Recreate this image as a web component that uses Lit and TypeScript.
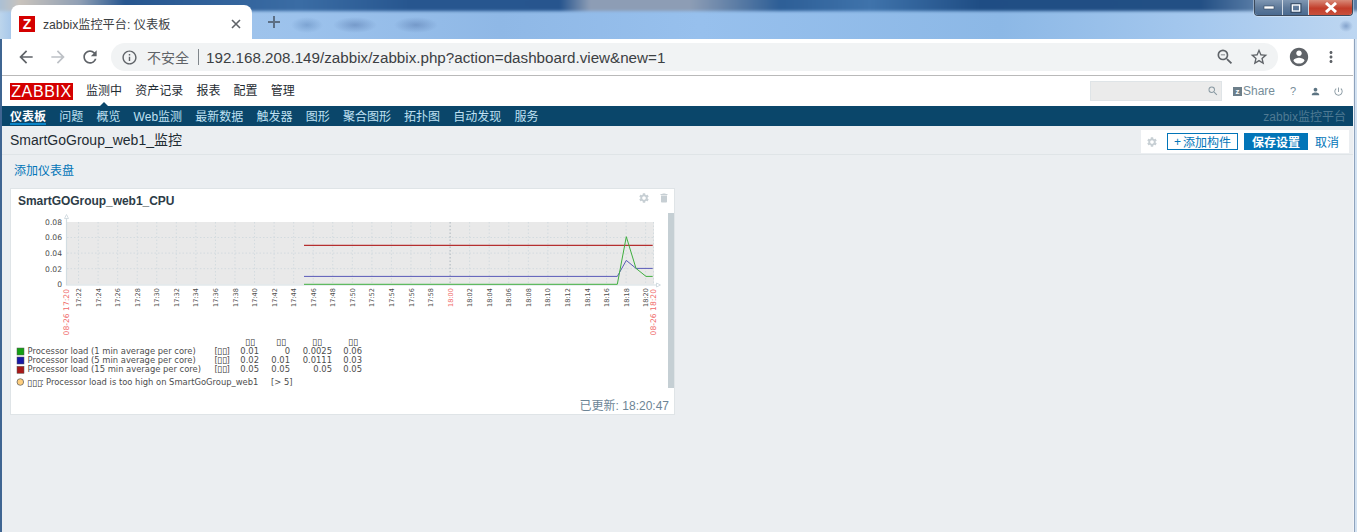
import { LitElement, html, css, svg } from 'lit';
import { customElement } from 'lit/decorators.js';

const GEAR = 'M19.14 12.94c.04-.3.06-.61.06-.94 0-.32-.02-.64-.07-.94l2.03-1.58a.49.49 0 0 0 .12-.61l-1.92-3.32a.488.488 0 0 0-.59-.22l-2.39.96c-.5-.38-1.03-.7-1.62-.94l-.36-2.54a.484.484 0 0 0-.48-.41h-3.84c-.24 0-.43.17-.47.41l-.36 2.54c-.59.24-1.13.57-1.62.94l-2.39-.96c-.22-.08-.47 0-.59.22L2.74 8.87c-.12.21-.08.47.12.61l2.03 1.58c-.05.3-.09.63-.09.94s.02.64.07.94l-2.03 1.58a.49.49 0 0 0-.12.61l1.92 3.32c.12.22.37.29.59.22l2.39-.96c.5.38 1.03.7 1.62.94l.36 2.54c.05.24.24.41.48.41h3.84c.24 0 .44-.17.47-.41l.36-2.54c.59-.24 1.13-.56 1.62-.94l2.39.96c.22.08.47 0 .59-.22l1.92-3.32c.12-.22.07-.47-.12-.61l-2.01-1.58zM12 15.6c-1.98 0-3.6-1.62-3.6-3.6s1.62-3.6 3.6-3.6 3.6 1.62 3.6 3.6-1.62 3.6-3.6 3.6z';

const icon = (d: string, size: number, color: string) => html`<svg width=${size} height=${size} viewBox="0 0 24 24" fill=${color}><path d=${d}></path></svg>`;

const mainNav = ['监测中', '资产记录', '报表', '配置', '管理'];
const subNav = ['仪表板', '问题', '概览', 'Web监测', '最新数据', '触发器', '图形', '聚合图形', '拓扑图', '自动发现', '服务'];

// graph geometry, in page pixels (the svg viewBox starts at the card body)
const plot = { left: 67, right: 654, top: 222, bottom: 284.5 };
const timeX = (i: number) => 59 + i * 19.555;
const valY = (v: number) => 284.3 - v * 780;

const times: { x: number; label: string; red: boolean }[] = [];
for (let i = 1; i <= 30; i++) {
  const total = 17 * 60 + 20 + i * 2;
  const h = Math.floor(total / 60);
  const m = String(total % 60).padStart(2, '0');
  times.push({ x: timeX(i), label: `${h}:${m}`, red: total === 18 * 60 });
}

const legend = [
  { color: '#14a014', name: 'Processor load (1 min average per core)', y: 351, vals: ['0.01', '0', '0.0025', '0.06'] },
  { color: '#1818a8', name: 'Processor load (5 min average per core)', y: 360, vals: ['0.02', '0.01', '0.0111', '0.03'] },
  { color: '#a81818', name: 'Processor load (15 min average per core)', y: 369.3, vals: ['0.05', '0.05', '0.05', '0.05'] },
];
const valCols = [259, 290, 332, 362];
const headCols = [250, 281, 317, 353];

const graph = () => svg`
  <rect x=${plot.left} y=${plot.top} width=${plot.right - plot.left} height=${plot.bottom - plot.top} fill="#e9e9e9"></rect>
  ${[0.02, 0.04, 0.06].map((v) => svg`<line class="grid" x1=${plot.left} x2=${plot.right} y1=${valY(v)} y2=${valY(v)}></line>`)}
  ${times.map((t) => svg`<line class=${t.red ? 'grid strong' : 'grid'} x1=${t.x} x2=${t.x} y1=${plot.top} y2=${plot.bottom}></line>`)}
  <line class="grid" x1=${plot.right - 0.5} x2=${plot.right - 0.5} y1=${plot.top} y2=${plot.bottom}></line>
  <path class="axis" d="M66.5 217V285H658"></path>
  <path class="arrow" d="M64.5 218.5 66.5 214.5 68.5 218.5Z"></path>
  <path class="arrow" d="M656.5 283 660.5 285 656.5 287Z"></path>

  <polyline class="line" stroke="#a80000" points="304,245.3 652.7,245.3"></polyline>
  <polyline class="line" stroke="#5a5ab8" points="304,276.4 617.3,276.4 626.3,260.4 636,268.4 652.7,268.4"></polyline>
  <polyline class="line" stroke="#3fae3f" points="304,284.3 617.3,284.3 626.3,236.7 636,268.4 646,276.4 652.7,276.4"></polyline>

  ${[['0.08', 0.08], ['0.06', 0.06], ['0.04', 0.04], ['0.02', 0.02], ['0', 0]].map(
    ([l, v]) => svg`<text class="lbl" x="62" y=${valY(v as number) + 2.8} text-anchor="end">${l}</text>`,
  )}
  ${times.map(
    (t) => svg`<text class=${t.red ? 'lbl tick red' : 'lbl tick'} text-anchor="end" transform="translate(${t.x + 2.6} 288) rotate(-90)">${t.label}</text>`,
  )}
  <text class="lbl red" text-anchor="end" transform="translate(69.2 289) rotate(-90)">08-26 17:20</text>
  <text class="lbl red" text-anchor="end" transform="translate(655.8 289) rotate(-90)">08-26 18:20</text>

  ${headCols.map((x) => svg`<text class="tofu" x=${x} y="345" text-anchor="middle">▯▯</text>`)}
  ${legend.map(
    (row) => svg`
      <rect x="17" y=${row.y - 3} width="7" height="7" fill=${row.color} stroke="#555" stroke-width="0.5"></rect>
      <text class="lbl legend" x="27.5" y=${row.y + 2.8}>${row.name}</text>
      <text class="lbl legend" x="214.5" y=${row.y + 2.8}>[</text>
      <text class="tofu" x="217" y=${row.y + 3}>▯▯</text>
      <text class="lbl legend" x="226.5" y=${row.y + 2.8}>]</text>
      ${row.vals.map((v, i) => svg`<text class="lbl legend" x=${valCols[i]} y=${row.y + 2.8} text-anchor="end">${v}</text>`)}
    `,
  )}
  <circle cx="20.3" cy="382" r="3.3" fill="#ffcf7f" stroke="#555" stroke-width="0.7"></circle>
  <text class="tofu" x="27" y="385.5">▯▯▯</text>
  <text class="lbl legend" x="41" y="385">:</text>
  <text class="lbl legend" x="46" y="385">Processor load is too high on SmartGoGroup_web1</text>
  <text class="lbl legend" x="271" y="385">[&gt; 5]</text>
`;

@customElement('app-root')
export class AppRoot extends LitElement {
  static styles = css`
    :host {
      display: block;
      width: 1357px;
      height: 532px;
      overflow: hidden;
      background: #ebeef1;
      font-family: 'Liberation Sans', 'Noto Sans CJK SC', sans-serif;
      font-size: 12px;
      color: #1f2c33;
    }

    .titlebar {
      position: relative;
      height: 39px;
      box-sizing: border-box;
      padding: 5px 0 0 11px;
      display: flex;
      overflow: hidden;
      background:
        radial-gradient(ellipse 16px 8px at 307px 25px, rgba(100, 140, 190, 0.55), transparent),
        radial-gradient(ellipse 22px 8px at 355px 25px, rgba(100, 135, 185, 0.65), transparent),
        radial-gradient(ellipse 22px 8px at 416px 25px, rgba(100, 135, 185, 0.65), transparent),
        radial-gradient(ellipse 7px 6px at 1346px 26px, rgba(95, 130, 180, 0.6), transparent),
        linear-gradient(90deg, #bcd5ec 0, #a8c8ea 11px, #9cc2ec 300px, #8fb8e6 500px, #97c0ed 700px, #8cb8e6 1000px, #a5c8ee 1200px, #bdd6f1 1357px);
    }
    .titlebar::before {
      content: '';
      position: absolute;
      left: -4px;
      right: -4px;
      top: -4px;
      height: 15px;
      filter: blur(1.5px);
      background: linear-gradient(90deg, #a5bfd9 0, #c9c3bc 24px, #8f9fb4 84px, #27568f 129px, #3a6ca4 304px, #27568f 414px, #27558e 564px, #8d9db5 594px, #8d9db5 694px, #2d5e96 784px, #3f73ab 874px, #1f4d84 984px, #224f84 1204px, #5c7fa8 1264px);
    }
    .tab {
      position: relative;
      width: 241px;
      height: 34px;
      box-sizing: border-box;
      background: #fff;
      border-radius: 8px 8px 0 0;
      display: flex;
      align-items: center;
      padding: 3px 10px 0 8px;
      font-size: 12.2px;
      color: #3c4043;
    }
    .favicon {
      width: 16px;
      height: 16px;
      background: #d40000;
      color: #fff;
      font-weight: bold;
      font-size: 14px;
      line-height: 16px;
      text-align: center;
      margin-right: 8px;
      flex: none;
    }
    .tab-title {
      flex: 1;
      white-space: nowrap;
    }
    .plus {
      position: relative;
      margin: 10px 0 0 15px;
    }
    .controls {
      position: absolute;
      top: 0;
      right: 4px;
      height: 15px;
      display: flex;
      border: 1px solid #3c4a5c;
      border-top: none;
      border-radius: 0 0 4px 4px;
      overflow: hidden;
      box-shadow: 0 0 0 1px rgba(255, 255, 255, 0.35);
    }
    .ctl {
      width: 28px;
      box-sizing: border-box;
      display: flex;
      align-items: center;
      justify-content: center;
      background: linear-gradient(#7f97b3, #5f7a9a 50%, #4a6a90);
      border-right: 1px solid #cfd9e4;
    }
    .ctl.max {
      width: 26px;
    }
    .ctl.close {
      width: 43px;
      border-right: none;
      background: linear-gradient(#d88a78, #c23d2a 55%, #c9503c);
    }

    .frame {
      display: flex;
      height: 493px;
    }
    .edge-left {
      width: 2px;
      background: #3f6592;
      flex: none;
    }
    .edge-right {
      width: 4px;
      background: linear-gradient(90deg, #f3f5f8 25%, #8fa3bc 25%, #8fa3bc 50%, #d3e2f2 50%);
      flex: none;
    }
    .main {
      flex: 1;
      min-width: 0;
    }

    .toolbar {
      height: 36px;
      background: #fff;
      border-bottom: 1px solid #b9b9b9;
      display: flex;
      align-items: center;
      position: relative;
    }
    .tool {
      flex: none;
      display: flex;
    }
    .pill {
      margin-left: 11px;
      width: 1167px;
      height: 28px;
      box-sizing: border-box;
      background: #f1f3f4;
      border-radius: 14px;
      display: flex;
      align-items: center;
      padding: 0 9px 0 10px;
    }
    .insecure {
      margin-left: 9px;
      font-size: 14px;
      color: #5f6368;
    }
    .sep {
      width: 1px;
      height: 16px;
      background: #80868b;
      margin: 0 7px 0 9px;
    }
    .url {
      font-size: 15.2px;
      color: #3c4043;
      flex: 1;
      white-space: nowrap;
    }
    .pill-icons {
      display: flex;
      gap: 14px;
      align-items: center;
    }

    .header {
      height: 30px;
      background: #fff;
      display: flex;
      align-items: center;
      padding-left: 8px;
      box-sizing: border-box;
    }
    .logo {
      width: 63px;
      height: 17px;
      background: #d40000;
      color: #fff;
      font-size: 16px;
      line-height: 17px;
      text-align: center;
      letter-spacing: 0.6px;
      margin-top: 1px;
    }
    .nav {
      display: flex;
      gap: 13.2px;
      margin: 0 0 3px 13px;
      color: #1f2c33;
    }
    .nav .on {
      position: relative;
    }
    .nav .on::after {
      content: '';
      position: absolute;
      left: 14px;
      top: 21px;
      border: 4px solid transparent;
      border-bottom-color: #0a466a;
      border-top: none;
    }
    .header-right {
      margin-left: auto;
      display: flex;
      align-items: center;
      color: #768d99;
      padding-right: 9px;
    }
    .search {
      width: 132px;
      height: 20px;
      box-sizing: border-box;
      background: #ebebeb;
      border: 1px solid #dfe4e7;
      display: flex;
      align-items: center;
      justify-content: flex-end;
      padding-right: 2px;
      margin-right: 11px;
    }
    .share {
      display: flex;
      align-items: center;
      gap: 1px;
      width: 57px;
    }
    .zbox {
      width: 9px;
      height: 9px;
      background: #6d7f8a;
      color: #fff;
      font-size: 8px;
      font-weight: bold;
      line-height: 9px;
      text-align: center;
    }
    .help {
      width: 20px;
      font-size: 11px;
    }
    .user {
      width: 23px;
      display: flex;
    }
    .power {
      display: flex;
    }

    .subnav {
      height: 20px;
      background: #0a466a;
      display: flex;
      align-items: center;
      gap: 13.2px;
      padding: 0 7px 2px 8px;
      box-sizing: border-box;
      color: #bfe0f2;
    }
    .subnav .on {
      position: relative;
      color: #fff;
      font-weight: bold;
    }
    .subnav .on::after {
      content: '';
      position: absolute;
      left: 0;
      right: 0;
      top: 16px;
      height: 2px;
      background: #0a85c8;
    }
    .brand {
      margin-left: auto;
      color: #4f7a93;
    }

    .title-row {
      height: 29px;
      box-sizing: border-box;
      border-bottom: 1px solid #dfe4e7;
      display: flex;
      align-items: center;
      justify-content: space-between;
      padding: 0 4px 0 8px;
    }
    h1 {
      margin: 0 0 2px;
      font-size: 14px;
      font-weight: normal;
      color: #1f2c33;
    }
    .actions {
      background: #fff;
      height: 23px;
      width: 208px;
      box-sizing: border-box;
      display: flex;
      align-items: center;
      padding-left: 5px;
      margin-top: 3px;
    }
    .actions .gear {
      display: flex;
      margin-right: 9px;
    }
    .btn {
      height: 17px;
      box-sizing: border-box;
      display: flex;
      align-items: center;
      justify-content: center;
      gap: 2px;
    }
    .btn.alt {
      width: 71px;
      border: 1px solid #0275b8;
      color: #0275b8;
    }
    .btn.save {
      width: 64px;
      margin-left: 6px;
      background: #0275b8;
      color: #fff;
      font-weight: bold;
    }
    .cancel {
      margin-left: 7px;
      color: #0275b8;
    }

    .add-board {
      height: 33px;
      box-sizing: border-box;
      padding: 6px 0 0 12px;
      color: #0275b8;
    }

    .card {
      width: 665px;
      height: 227px;
      box-sizing: border-box;
      margin-left: 8px;
      background: #fff;
      border: 1px solid #dfe4e7;
    }
    .card-head {
      height: 24px;
      display: flex;
      align-items: center;
      padding: 0 4px 0 7px;
    }
    .card-title {
      font-weight: bold;
      color: #2d3c47;
      letter-spacing: -0.05px;
      flex: 1;
    }
    .card-head svg {
      margin-left: 8px;
      margin-bottom: 6px;
    }
    .card-body {
      display: flex;
      height: 175px;
    }
    .chart {
      width: 657px;
      height: 175px;
      display: block;
      flex: none;
    }
    .scroll {
      width: 6px;
      background: #c5cfd4;
    }
    .updated {
      text-align: right;
      padding: 8px 5px 0 0;
      color: #6d8596;
    }

    .grid {
      stroke: #d3dbdf;
      stroke-width: 1;
      stroke-dasharray: 1.5 2;
    }
    .grid.strong {
      stroke: #aab6bd;
    }
    .axis {
      fill: none;
      stroke: #d3dde2;
      stroke-width: 1.2;
    }
    .arrow {
      fill: #fff;
      stroke: #c9d4da;
      stroke-width: 0.8;
    }
    .line {
      fill: none;
      stroke-width: 1;
    }
    .lbl {
      font-family: 'DejaVu Sans', sans-serif;
      font-size: 7.6px;
      fill: #4d4d4d;
    }
    .legend {
      font-size: 8.4px;
    }
    .tick {
      font-size: 6.6px;
    }
    .red {
      fill: #f06a6a;
    }
    .tofu {
      font-family: 'DejaVu Sans', sans-serif;
      font-size: 9px;
      fill: #333;
    }
  `;

  render() {
    return html`
      <div class="titlebar">
        <div class="tab">
          <span class="favicon">Z</span>
          <span class="tab-title">zabbix监控平台: 仪表板</span>
          <svg width="12" height="12" viewBox="0 0 12 12" stroke="#5f6368" stroke-width="1.6"><path d="M2 2 10 10M10 2 2 10"></path></svg>
        </div>
        <svg class="plus" width="14" height="14" viewBox="0 0 14 14" stroke="#5c6f85" stroke-width="2"><path d="M7 1V13M1 7H13"></path></svg>
        <div class="controls">
          <div class="ctl"><svg width="12" height="5" viewBox="0 0 12 5"><rect x="1" y="1" width="10" height="3" fill="#fff" stroke="#33475f" stroke-width="0.6"></rect></svg></div>
          <div class="ctl max"><svg width="12" height="10" viewBox="0 0 12 10"><rect x="1" y="0.7" width="10" height="8.6" fill="none" stroke="#33475f"></rect><rect x="2.4" y="2" width="7.2" height="6" fill="none" stroke="#fff" stroke-width="1.3"></rect></svg></div>
          <div class="ctl close"><svg width="14" height="11" viewBox="0 0 14 11"><path d="M2 1 12 10M12 1 2 10" stroke="#fff" stroke-width="3"></path></svg></div>
        </div>
      </div>
      <div class="frame">
        <div class="edge-left"></div>
        <div class="main">
          <div class="toolbar">
            <span class="tool" style="margin-left:14px">${icon('M20 11H7.83l5.59-5.59L12 4l-8 8 8 8 1.41-1.41L7.83 13H20v-2z', 20, '#5f6368')}</span>
            <span class="tool" style="margin-left:12px">${icon('M12 4l-1.41 1.41L16.17 11H4v2h12.17l-5.58 5.59L12 20l8-8z', 20, '#bdc1c6')}</span>
            <span class="tool" style="margin-left:12px">${icon('M17.65 6.35A7.958 7.958 0 0 0 12 4c-4.42 0-7.99 3.58-7.99 8s3.57 8 7.99 8c3.73 0 6.84-2.55 7.73-6h-2.08A5.99 5.99 0 0 1 12 18c-3.31 0-6-2.69-6-6s2.69-6 6-6c1.66 0 3.14.69 4.22 1.78L13 11h7V4l-2.35 2.35z', 20, '#5f6368')}</span>
            <div class="pill">
              ${icon('M11 7h2v2h-2zm0 4h2v6h-2zm1-9C6.48 2 2 6.48 2 12s4.48 10 10 10 10-4.48 10-10S17.52 2 12 2zm0 18c-4.41 0-8-3.59-8-8s3.59-8 8-8 8 3.59 8 8-3.59 8-8 8z', 17, '#5f6368')}
              <span class="insecure">不安全</span>
              <span class="sep"></span>
              <span class="url">192.168.208.149/zabbix/zabbix.php?action=dashboard.view&amp;new=1</span>
              <div class="pill-icons">
                ${icon('M15.5 14h-.79l-.28-.27A6.47 6.47 0 0 0 16 9.5 6.5 6.5 0 1 0 9.5 16c1.61 0 3.09-.59 4.23-1.57l.27.28v.79l5 4.99L20.49 19l-4.99-5zm-6 0C7.01 14 5 11.99 5 9.5S7.01 5 9.5 5 14 7.01 14 9.5 11.99 14 9.5 14zM7 9h5v1H7z', 20, '#5f6368')}
                ${icon('M22 9.24l-7.19-.62L12 2 9.19 8.63 2 9.24l5.46 4.73L5.82 21 12 17.27 18.18 21l-1.63-7.03L22 9.24zM12 15.4l-3.76 2.27 1-4.28-3.32-2.88 4.38-.38L12 6.1l1.71 4.04 4.38.38-3.32 2.88 1 4.28L12 15.4z', 20, '#5f6368')}
              </div>
            </div>
            <span class="tool" style="margin-left:10px">${icon('M12 2C6.48 2 2 6.48 2 12s4.48 10 10 10 10-4.48 10-10S17.52 2 12 2zm0 3c1.66 0 3 1.34 3 3s-1.34 3-3 3-3-1.34-3-3 1.34-3 3-3zm0 14.2c-2.5 0-4.71-1.28-6-3.22.03-1.99 4-3.08 6-3.08 1.99 0 5.97 1.09 6 3.08-1.29 1.94-3.5 3.22-6 3.22z', 22, '#5f6368')}</span>
            <span class="tool" style="margin-left:12px">${icon('M12 8c1.1 0 2-.9 2-2s-.9-2-2-2-2 .9-2 2 .9 2 2 2zm0 2c-1.1 0-2 .9-2 2s.9 2 2 2 2-.9 2-2-.9-2-2-2zm0 6c-1.1 0-2 .9-2 2s.9 2 2 2 2-.9 2-2-.9-2-2-2z', 18, '#5f6368')}</span>
          </div>

          <div class="header">
            <div class="logo">ZABBIX</div>
            <div class="nav">${mainNav.map((n, i) => html`<span class=${i === 0 ? 'on' : ''}>${n}</span>`)}</div>
            <div class="header-right">
              <div class="search">${icon('M15.5 14h-.79l-.28-.27A6.47 6.47 0 0 0 16 9.5 6.5 6.5 0 1 0 9.5 16c1.61 0 3.09-.59 4.23-1.57l.27.28v.79l5 4.99L20.49 19l-4.99-5zm-6 0C7.01 14 5 11.99 5 9.5S7.01 5 9.5 5 14 7.01 14 9.5 11.99 14 9.5 14z', 12, '#8a9aa3')}</div>
              <div class="share"><span class="zbox">z</span>Share</div>
              <span class="help">?</span>
              <span class="user">${icon('M12 12c2.21 0 4-1.79 4-4s-1.79-4-4-4-4 1.79-4 4 1.79 4 4 4zm0 2c-2.67 0-8 1.34-8 4v2h16v-2c0-2.66-5.33-4-8-4z', 11, '#5c7482')}</span>
              <span class="power">${icon('M13 3h-2v10h2V3zm4.83 2.17l-1.42 1.42A6.92 6.92 0 0 1 19 12c0 3.87-3.13 7-7 7s-7-3.13-7-7c0-2.27 1.08-4.28 2.75-5.59L6.34 5C4.29 6.65 3 9.17 3 12c0 4.97 4.03 9 9 9s9-4.03 9-9c0-2.83-1.29-5.35-3.17-6.83z', 11, '#8a9aa3')}</span>
            </div>
          </div>

          <div class="subnav">
            ${subNav.map((n, i) => html`<span class=${i === 0 ? 'on' : ''}>${n}</span>`)}
            <span class="brand">zabbix监控平台</span>
          </div>

          <div class="title-row">
            <h1>SmartGoGroup_web1_监控</h1>
            <div class="actions">
              <span class="gear">${icon(GEAR, 12, '#c7cfd4')}</span>
              <span class="btn alt"><span>+</span><span>添加构件</span></span>
              <span class="btn save">保存设置</span>
              <span class="cancel">取消</span>
            </div>
          </div>

          <div class="add-board">添加仪表盘</div>

          <div class="card">
            <div class="card-head">
              <span class="card-title">SmartGOGroup_web1_CPU</span>
              ${icon(GEAR, 12, '#c7cfd4')}
              ${icon('M6 19c0 1.1.9 2 2 2h8c1.1 0 2-.9 2-2V7H6v12zM19 4h-3.5l-1-1h-5l-1 1H5v2h14V4z', 12, '#c7cfd4')}
            </div>
            <div class="card-body">
              <svg class="chart" viewBox="11 213 657 175">${graph()}</svg>
              <div class="scroll"></div>
            </div>
            <div class="updated">已更新: 18:20:47</div>
          </div>
        </div>
        <div class="edge-right"></div>
      </div>
    `;
  }
}
